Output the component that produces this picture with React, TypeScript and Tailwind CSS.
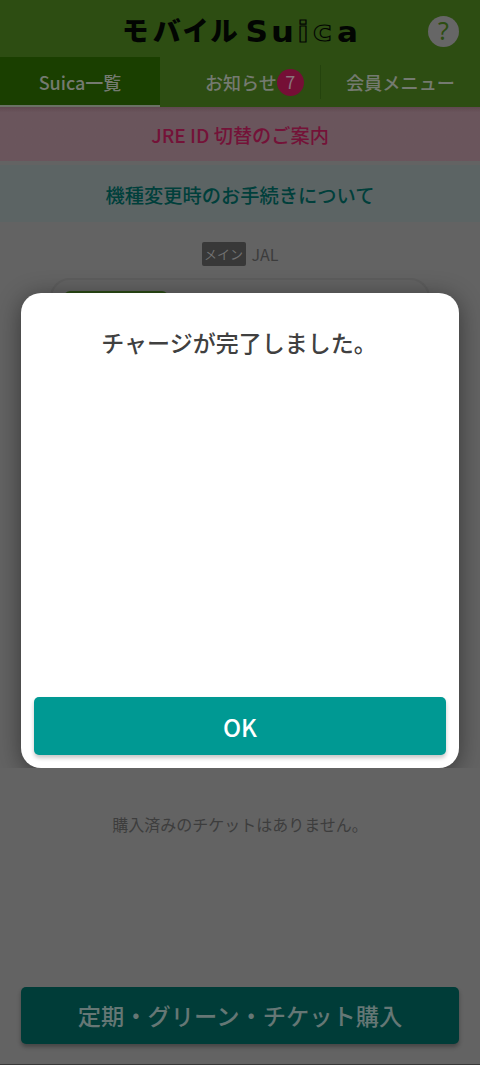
const logoKana = [
  { char: 'モ', x: 122, width: 26.5 },
  { char: 'バ', x: 152.8, width: 28 },
  { char: 'イ', x: 182.4, width: 26 },
  { char: 'ル', x: 210.2, width: 27.5 },
];

function Logo() {
  return (
    <svg
      width="240"
      height="50"
      viewBox="120 4 240 50"
      className="absolute left-[120px] top-1 overflow-visible font-['Noto_Sans_CJK_JP',sans-serif]"
      role="img"
      aria-label="モバイルSuica"
    >
      <g fontSize="27" fontWeight="900" fill="#020502">
        {logoKana.map((k) => (
          <text key={k.char} x={k.x} y="41" textLength={k.width} lengthAdjust="spacingAndGlyphs">
            {k.char}
          </text>
        ))}
      </g>
      <g className="font-['DejaVu_Sans',sans-serif]" fontWeight="700" fontSize="29" fill="#020502">
        <text x="245.5" y="41.8" fontSize="30" textLength="22.5" lengthAdjust="spacingAndGlyphs">S</text>
        <text x="271" y="41.8" textLength="23" lengthAdjust="spacingAndGlyphs">u</text>
        <g fill="none" stroke="#020502" strokeWidth="1.1">
          <text x="297.3" y="41.7" fontSize="28.5" textLength="11.5" lengthAdjust="spacingAndGlyphs">i</text>
          <text x="313" y="41.3" textLength="19" lengthAdjust="spacingAndGlyphs">c</text>
        </g>
        <text x="337" y="41.8" textLength="21" lengthAdjust="spacingAndGlyphs">a</text>
      </g>
    </svg>
  );
}

function Header() {
  return (
    <header className="bg-[#2d4d12]">
      <div className="relative flex h-[57px] items-center justify-end pr-[21px]">
        <Logo />
        <button className="mt-[5px] flex size-[31px] items-center justify-center rounded-full bg-[#666666] text-[25px] leading-none text-[#2d4d12]">
          <span className="-mt-0.5 font-['Noto_Sans',sans-serif] font-normal">?</span>
        </button>
      </div>
      <nav className="flex h-[50px] text-[18px] leading-[50px] text-[#747a70]">
        <div className="w-40 border-b-2 border-[#6a7164] bg-[#1a3f00] text-center">Suica一覧</div>
        <div className="flex w-40 items-center pl-[45px]">
          <span>お知らせ</span>
          <span className="flex size-[27px] items-center justify-center rounded-full bg-[#750f36] pb-0.5 text-lg font-normal leading-none text-[#8a737b]">
            7
          </span>
        </div>
        <div className="my-2 h-[34px] w-px bg-[#24430d]" />
        <div className="flex-1 text-center text-[18.2px]">会員メニュー</div>
      </nav>
    </header>
  );
}

export default function App() {
  return (
    <div className="relative flex h-[1065px] w-[480px] flex-col overflow-hidden bg-[#636363] font-['Noto_Sans_CJK_JP',sans-serif] font-medium">
      <Header />
      <div className="h-[54px] bg-[#6a555c] bg-linear-to-b from-[#60494f] to-[#6a555c] to-10% text-center text-[19.2px] leading-[56px] text-[#741238]">
        JRE ID 切替のご案内
      </div>
      <div className="mt-1 h-[57px] bg-[#5c6464] text-center text-[19.25px] leading-[60px] text-[#003f3b]">
        機種変更時のお手続きについて
      </div>
      <div className="mt-5 flex h-6 justify-center gap-1.5 font-normal leading-6 text-[#3c3c3c]">
        <span className="w-[44px] rounded-[2px] bg-[#383838] text-center text-[13px] text-[#707070]">メイン</span>
        <span className="text-base">JAL</span>
      </div>
      <div className="mx-[50px] mt-3 h-[480px] rounded-[20px] border-2 border-[#5d5d5d] px-3 pt-[11px]">
        <div className="h-[60px] w-[104px] rounded-md bg-[#2c4c16]" />
      </div>
      <div className="relative -mt-[15px] flex-1 bg-[#636363]">
        <p className="pt-[69px] text-center text-base font-normal leading-6 text-[#3d3d3d]">
          購入済みのチケットはありません。
        </p>
      </div>
      <button className="mx-[21px] mb-[21px] h-[57px] shrink-0 rounded-[5px] bg-[#003c38] text-[23.25px] text-[#657775] shadow-[0_3px_4px_rgba(0,0,0,0.3)]">
        定期・グリーン・チケット購入
      </button>
      <div className="absolute inset-x-0 bottom-0 h-px bg-[#383838]" />

      <div className="absolute inset-x-0 top-0 h-[768px] overflow-hidden">
        <div
          role="dialog"
          className="mx-[21px] mt-[293px] flex h-[475px] flex-col justify-between rounded-[20px] bg-white px-[13px] pb-[13px] pt-[29px] shadow-[0_4px_24px_rgba(0,0,0,0.45)]"
        >
          <h2 className="pr-0.5 text-center text-[23px] leading-10 text-[#404040]">チャージが完了しました。</h2>
          <button className="h-[58px] rounded-[5px] bg-[#009993] pt-0.5 text-2xl text-white shadow-[0_3px_4px_rgba(0,0,0,0.22)]">
            OK
          </button>
        </div>
      </div>
    </div>
  );
}
